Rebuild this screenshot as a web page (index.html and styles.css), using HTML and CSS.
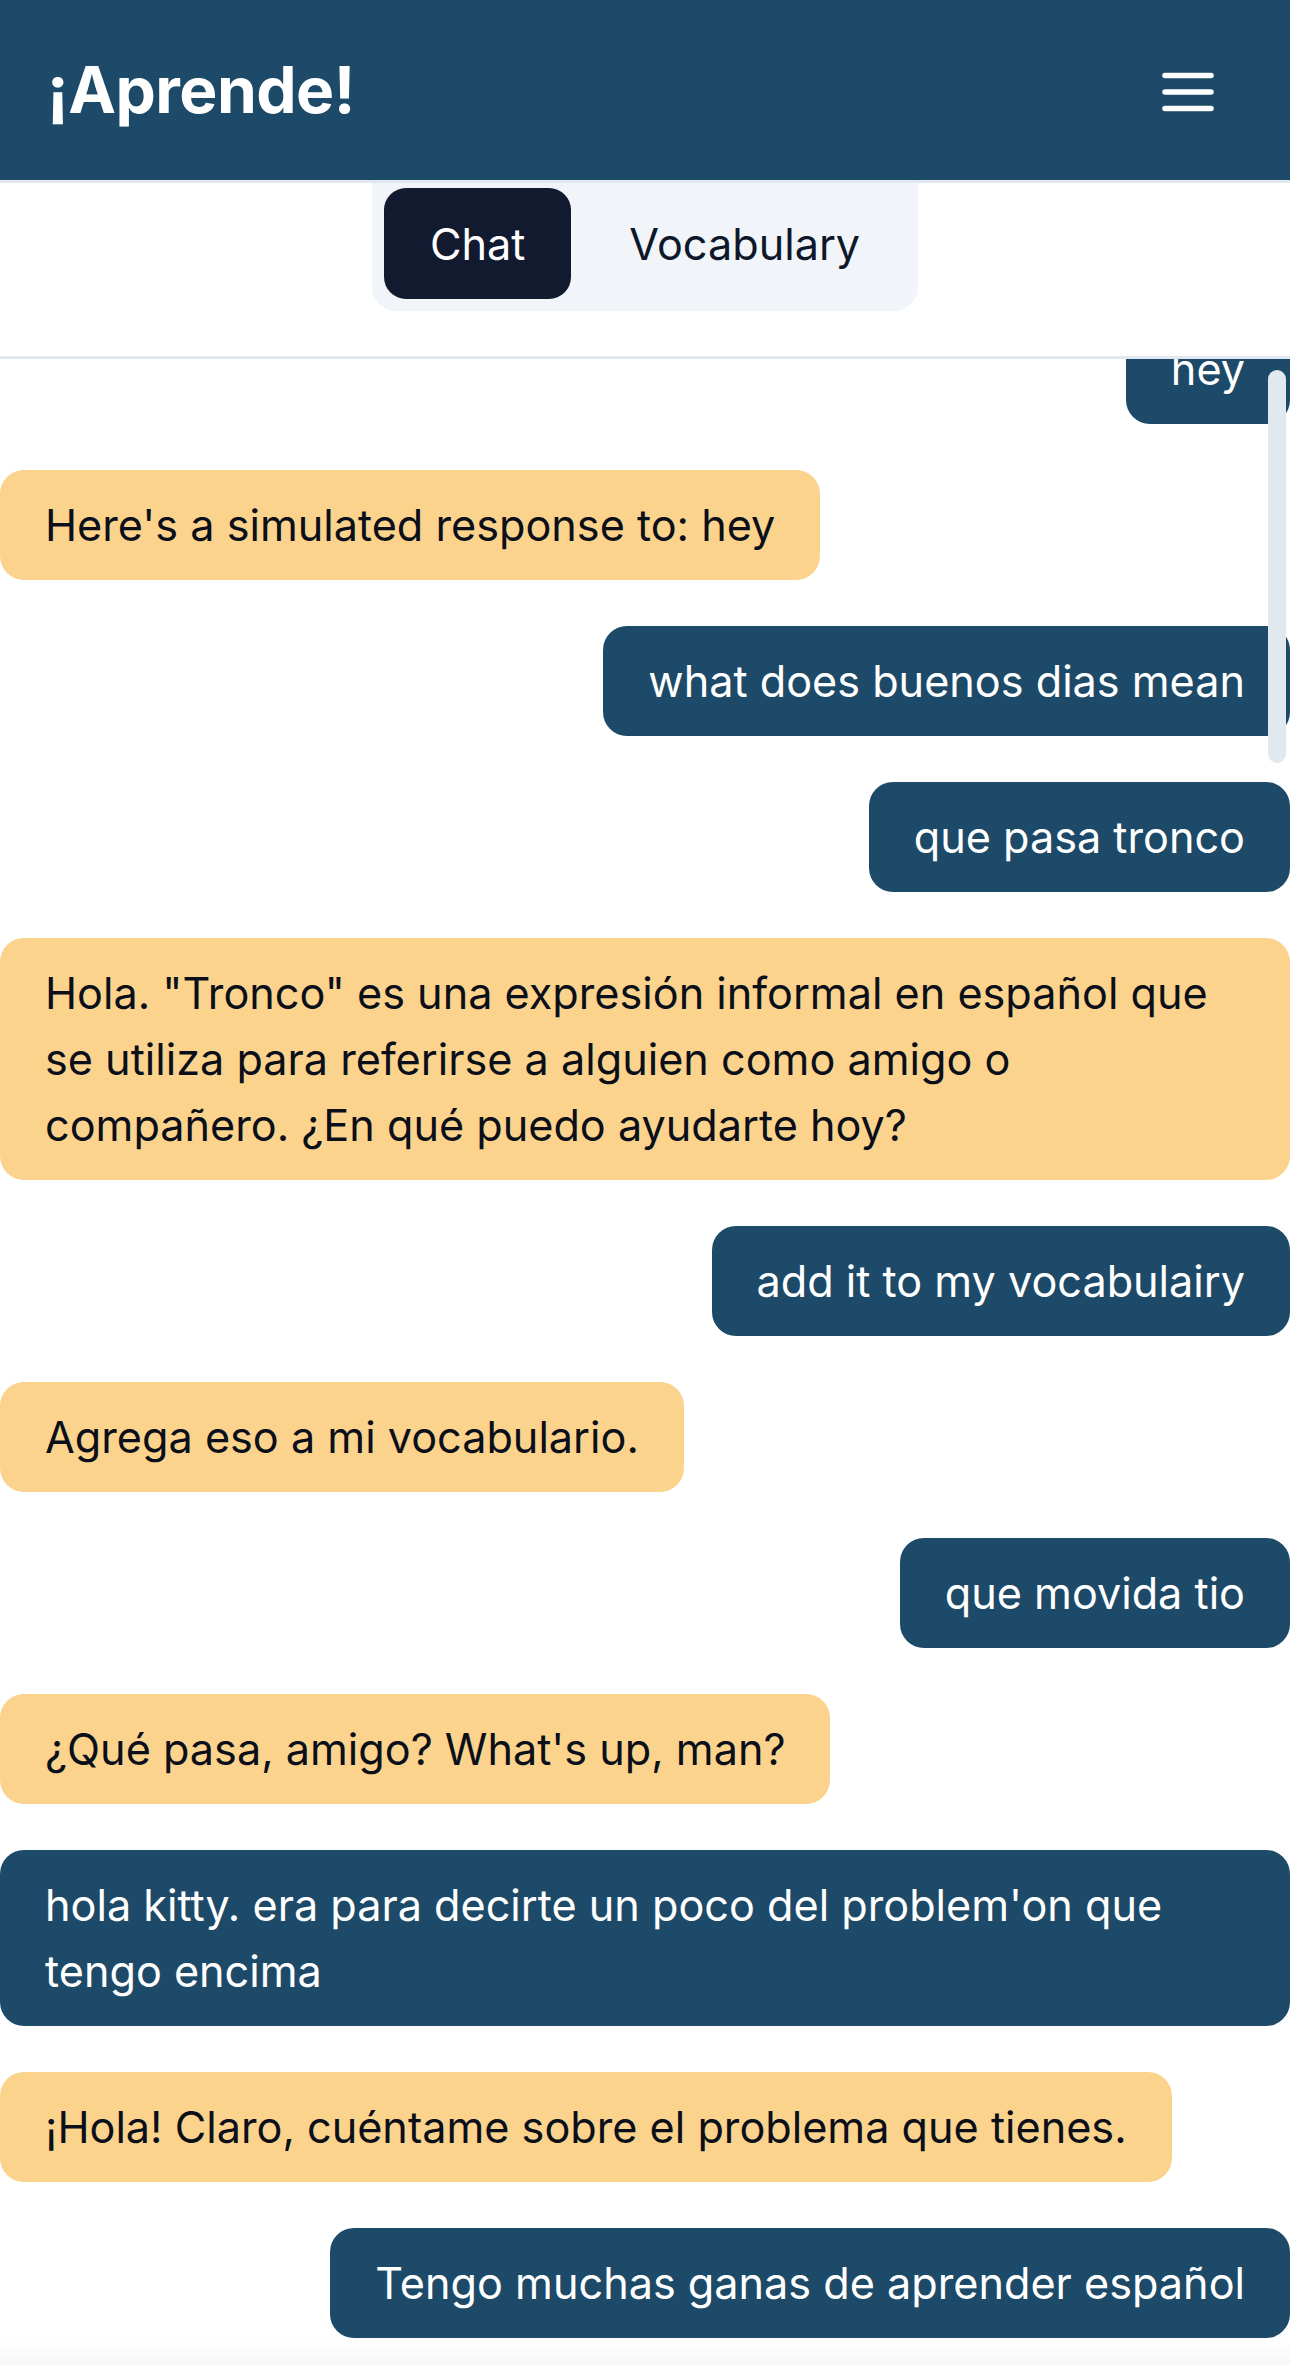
FILE: index.html
```html
<!DOCTYPE html>
<html lang="es">
<head>
<meta charset="utf-8">
<title>¡Aprende!</title>
<link rel="stylesheet" href="styles.css">
</head>
<body>
<div class="app">
  <header class="topbar">
    <h1 class="logo">¡Aprende!</h1>
    <button class="menu-btn" aria-label="Menu">
      <svg width="52" height="40" viewBox="0 0 52 40">
        <g stroke="#ffffff" stroke-width="5.5" stroke-linecap="round">
          <line x1="3" y1="3.5" x2="49" y2="3.5"/>
          <line x1="3" y1="20" x2="49" y2="20"/>
          <line x1="3" y1="36.5" x2="49" y2="36.5"/>
        </g>
      </svg>
    </button>
  </header>

  <nav class="tabs-wrap">
    <div class="tabs">
      <button class="tab tab-active">Chat</button>
      <button class="tab">Vocabulary</button>
    </div>
  </nav>

  <main class="chat">
    <div class="messages">
      <div class="msg user first">hey</div>
      <div class="msg bot">Here's a simulated response to: hey</div>
      <div class="msg user">what does buenos dias mean</div>
      <div class="msg user">que pasa tronco</div>
      <div class="msg bot">Hola. "Tronco" es una expresión informal en español que se utiliza para referirse a alguien como amigo o compañero. ¿En qué puedo ayudarte hoy?</div>
      <div class="msg user">add it to my vocabulairy</div>
      <div class="msg bot">Agrega eso a mi vocabulario.</div>
      <div class="msg user">que movida tio</div>
      <div class="msg bot">¿Qué pasa, amigo? What's up, man?</div>
      <div class="msg user">hola kitty. era para decirte un poco del problem'on que tengo encima</div>
      <div class="msg bot">¡Hola! Claro, cuéntame sobre el problema que tienes.</div>
      <div class="msg user">Tengo muchas ganas de aprender español</div>
    </div>
    <div class="scrollbar"></div>
    <div class="bottom-fade"></div>
  </main>
</div>
</body>
</html>
```

FILE: styles.css
```css
* {
  box-sizing: border-box;
}

html, body {
  margin: 0;
  padding: 0;
  background: #ffffff;
}

body {
  font-family: Inter, "Noto Sans", "Liberation Sans", sans-serif;
  color: #0f172a;
}

.app {
  display: flex;
  flex-direction: column;
  height: 2365px;
  overflow: hidden;
}

.topbar {
  flex: 0 0 auto;
  height: 183px;
  background: #1d4a68;
  border-bottom: 3px solid #e2e8f0;
  display: flex;
  align-items: center;
  justify-content: space-between;
  padding: 0 76px 0 47px;
}

.logo {
  margin: 0;
  color: #ffffff;
  font-size: 64px;
  font-weight: 700;
  letter-spacing: -0.5px;
  line-height: 1;
}

.menu-btn {
  background: none;
  border: 0;
  padding: 0;
  margin: 0;
  display: flex;
  align-items: center;
  margin-top: 3px;
}

.menu-btn svg {
  display: block;
}

.tabs-wrap {
  flex: 0 0 auto;
  display: flex;
  justify-content: center;
  padding-bottom: 45px;
  border-bottom: 3px solid #e2e8f0;
}

.tabs {
  display: flex;
  background: #f1f5f9;
  padding: 5px 12px 12px;
  border-radius: 0 0 24px 24px;
}

.tab {
  font-family: inherit;
  font-size: 43.2px;
  line-height: 66px;
  padding: 23px 46px 22px;
  border: 0;
  border-radius: 22px;
  background: transparent;
  color: #0f172a;
  cursor: pointer;
}

.tab-active {
  background: #111a2e;
  color: #ffffff;
}

.tab + .tab {
  padding: 23px 46px 22px 58px;
}

.chat {
  flex: 1 1 auto;
  position: relative;
  overflow: hidden;
}

.messages {
  display: flex;
  flex-direction: column;
  gap: 46px;
}

.msg {
  font-size: 43.2px;
  line-height: 66px;
  padding: 22px 45px;
  border-radius: 24px;
  max-width: 100%;
}

.msg.first {
  margin-top: -45px;
}

.user {
  align-self: flex-end;
  background: #1d4a68;
  color: #ffffff;
}

.bot {
  align-self: flex-start;
  background: #fbd38d;
  color: #0b0f19;
}

.scrollbar {
  position: absolute;
  top: 11px;
  right: 4px;
  width: 18px;
  height: 393px;
  border-radius: 9px;
  background: #e2e8f0;
}

.bottom-fade {
  position: absolute;
  left: 0;
  right: 0;
  bottom: 0;
  height: 26px;
  background: linear-gradient(to bottom, rgba(248, 249, 251, 0), #f6f7f9);
}
```
